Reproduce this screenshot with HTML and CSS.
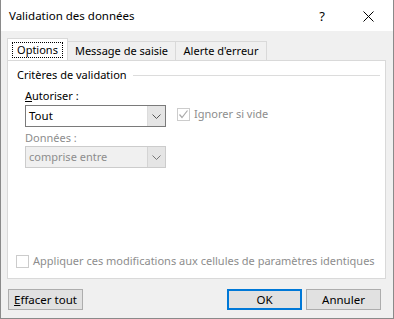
FILE: index.html
```html
<!DOCTYPE html>
<html lang="fr">
<head>
  <meta charset="UTF-8">
  <title>Validation des données</title>
  <link rel="stylesheet" href="styles.css">
</head>
<body>
  <div class="dialog">
    <div class="titlebar">
      <span class="title">Validation des données</span>
      <span class="help">?</span>
      <span class="close">
        <svg width="11" height="11" viewBox="0 0 11 11"><path d="M0.5 0.5 L10.5 10.5 M10.5 0.5 L0.5 10.5" stroke="#000" stroke-width="1"/></svg>
      </span>
    </div>

    <div class="content">
      <div class="tabs">
        <div class="tab active"><span class="focus">Options</span></div>
        <div class="tab msg">Message de saisie</div>
        <div class="tab alert">Alerte d'erreur</div>
      </div>

      <div class="panel">
        <div class="group-title">
          <span>Critères de validation</span>
          <span class="rule"></span>
        </div>

        <div class="fields">
          <div class="label"><u>A</u>utoriser :</div>
          <div class="row">
            <div class="combo">
              <span class="value">Tout</span>
              <span class="arrow">
                <svg width="9" height="5" viewBox="0 0 9 5"><path d="M0.5 0.5 L4.5 4.5 L8.5 0.5" fill="none" stroke="#555" stroke-width="1"/></svg>
              </span>
            </div>
            <label class="check disabled ignore">
              <span class="box">
                <svg width="11" height="11" viewBox="0 0 11 11"><path d="M1.5 5.5 L4 8.5 L9.5 1.5" fill="none" stroke="#aaa" stroke-width="1.2"/></svg>
              </span>
              Ignorer si vide
            </label>
          </div>

          <div class="label disabled-text data-label">Données :</div>
          <div class="combo disabled">
            <span class="value">comprise entre</span>
            <span class="arrow">
              <svg width="9" height="5" viewBox="0 0 9 5"><path d="M0.5 0.5 L4.5 4.5 L8.5 0.5" fill="none" stroke="#777" stroke-width="1"/></svg>
            </span>
          </div>
        </div>

        <label class="check disabled apply">
          <span class="box"></span>
          Appliquer ces modifications aux cellules de paramètres identiques
        </label>
      </div>

      <div class="buttons">
        <button class="btn"><u>E</u>ffacer tout</button>
        <span class="spacer"></span>
        <button class="btn default">OK</button>
        <button class="btn">Annuler</button>
      </div>
    </div>
  </div>
</body>
</html>
```

FILE: styles.css
```css
body {
  margin: 0;
  font-family: "Noto Sans", sans-serif;
  font-size: 11px;
  color: #000;
}

.dialog {
  width: 394px;
  height: 319px;
  box-sizing: border-box;
  border: 1px solid #8a8a8a;
  border-top: none;
  background-color: #f0f0f0;
  display: flex;
  flex-direction: column;
}

.titlebar {
  height: 31px;
  background-color: white;
  display: flex;
  align-items: center;
  padding-left: 8px;
  font-size: 11.5px;
}

.title {
  flex: 1;
  line-height: 16px;
}

.help {
  font-size: 13px;
  width: 46px;
  text-align: center;
}

.close {
  width: 46px;
  display: flex;
  justify-content: center;
  padding-top: 1px;
  margin-right: 2px;
}

.content {
  padding: 8px 7px 0 6px;
  display: flex;
  flex-direction: column;
  flex: 1;
}

.tabs {
  display: flex;
  align-items: flex-end;
  height: 21px;
}

.tab {
  height: 18px;
  line-height: 18px;
  border: 1px solid #d9d9d9;
  border-bottom: none;
  border-left: none;
  text-align: center;
  background-color: #f0f0f0;
  white-space: nowrap;
}

.tab.msg {
  width: 107px;
}

.tab.alert {
  width: 90px;
}

.tab.active {
  width: 59px;
  height: 21px;
  line-height: 21px;
  background-color: white;
  border-left: 1px solid #d9d9d9;
}

.focus {
  display: inline-block;
  line-height: 14px;
  padding: 0 4px;
  border: 1px dotted #000;
}

.panel {
  height: 219px;
  box-sizing: border-box;
  background-color: white;
  border: 1px solid #d9d9d9;
  display: flex;
  flex-direction: column;
}

.group-title {
  display: flex;
  align-items: center;
  padding: 6px 5px 0 9px;
  line-height: 16px;
}

.rule {
  flex: 1;
  height: 1px;
  background-color: #dcdcdc;
  margin-left: 6px;
}

.fields {
  padding-left: 17px;
  margin-top: 5px;
}

.label {
  line-height: 16px;
}

.disabled-text {
  color: #8d8d8d;
}

.row {
  display: flex;
  align-items: flex-start;
  margin-top: 1px;
}

.data-label {
  margin-top: 3px;
}

.combo {
  width: 141px;
  height: 22px;
  box-sizing: border-box;
  border: 1px solid #7a7a7a;
  display: flex;
  align-items: stretch;
  background-color: white;
}

.combo .value {
  flex: 1;
  line-height: 20px;
  padding-left: 3px;
  font-size: 11.5px;
}

.combo .arrow {
  width: 17px;
  display: flex;
  align-items: center;
  justify-content: center;
  background-color: #e5e5e5;
  border-left: 1px solid #dcdcdc;
}

.combo.disabled {
  border-color: #cccccc;
  background-color: #f0f0f0;
  color: #8d8d8d;
}

.combo.disabled .value {
  font-size: 11px;
}

.combo.disabled .arrow {
  border-left: 1px solid #d4d4d4;
}

.check {
  display: flex;
  align-items: center;
  line-height: 16px;
  white-space: nowrap;
}

.check.disabled {
  color: #8d8d8d;
}

.box {
  width: 13px;
  height: 13px;
  box-sizing: border-box;
  border: 1px solid #cccccc;
  background-color: white;
  margin-right: 4px;
  display: flex;
  align-items: center;
  justify-content: center;
}

.ignore {
  margin-left: 11px;
  margin-top: 1px;
}

.apply {
  margin-top: auto;
  margin-bottom: 9px;
  padding-left: 8px;
}

.buttons {
  display: flex;
  margin-top: 10px;
  padding-left: 1px;
  padding-right: 5px;
}

.spacer {
  flex: 1;
}

.btn {
  width: 75px;
  height: 21px;
  font-family: inherit;
  font-size: 11.5px;
  background-color: #e1e1e1;
  border: 1px solid #adadad;
  padding: 0;
  color: #000;
}

.btn.default {
  border-color: #0078d7;
  box-shadow: inset 0 0 0 1px #0078d7;
  margin-right: 4px;
}
```
